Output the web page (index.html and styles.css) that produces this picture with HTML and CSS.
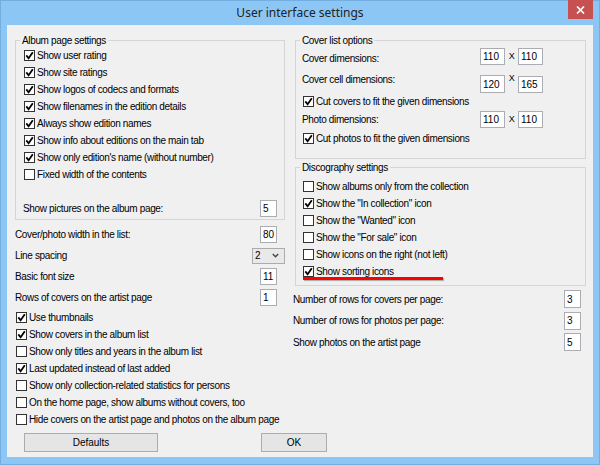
FILE: index.html
```html
<!DOCTYPE html>
<html>
<head>
<meta charset="utf-8">
<title>User interface settings</title>
<link rel="stylesheet" href="styles.css">
</head>
<body>
<div class="window">
  <div class="titlebar">
    <span></span>
    <div class="title">User interface settings</div>
    <div class="close"><svg width="9" height="8" viewBox="0 0 9 8"><path d="M1 0.5 L8 7.5 M8 0.5 L1 7.5" stroke="#fff" stroke-width="1.7"/></svg></div>
  </div>
  <div class="content">
    <div class="cols">
      <div class="col left">
        <fieldset class="grp album">
          <legend>Album page settings</legend>
          <label class="cb"><span class="box"><svg viewBox="0 0 9 9" width="9" height="9"><path d="M1.3 4.4 L3.6 7.2 L7.8 1.3" fill="none" stroke="#000" stroke-width="1.8"/></svg></span>Show user rating</label>
          <label class="cb"><span class="box"><svg viewBox="0 0 9 9" width="9" height="9"><path d="M1.3 4.4 L3.6 7.2 L7.8 1.3" fill="none" stroke="#000" stroke-width="1.8"/></svg></span>Show site ratings</label>
          <label class="cb"><span class="box"><svg viewBox="0 0 9 9" width="9" height="9"><path d="M1.3 4.4 L3.6 7.2 L7.8 1.3" fill="none" stroke="#000" stroke-width="1.8"/></svg></span>Show logos of codecs and formats</label>
          <label class="cb"><span class="box"><svg viewBox="0 0 9 9" width="9" height="9"><path d="M1.3 4.4 L3.6 7.2 L7.8 1.3" fill="none" stroke="#000" stroke-width="1.8"/></svg></span>Show filenames in the edition details</label>
          <label class="cb"><span class="box"><svg viewBox="0 0 9 9" width="9" height="9"><path d="M1.3 4.4 L3.6 7.2 L7.8 1.3" fill="none" stroke="#000" stroke-width="1.8"/></svg></span>Always show edition names</label>
          <label class="cb"><span class="box"><svg viewBox="0 0 9 9" width="9" height="9"><path d="M1.3 4.4 L3.6 7.2 L7.8 1.3" fill="none" stroke="#000" stroke-width="1.8"/></svg></span>Show info about editions on the main tab</label>
          <label class="cb"><span class="box"><svg viewBox="0 0 9 9" width="9" height="9"><path d="M1.3 4.4 L3.6 7.2 L7.8 1.3" fill="none" stroke="#000" stroke-width="1.8"/></svg></span>Show only edition's name (without number)</label>
          <label class="cb"><span class="box"></span>Fixed width of the contents</label>
          <div class="frow pics"><span>Show pictures on the album page:</span><input class="num" value="5"></div>
        </fieldset>

        <div class="frow first"><span>Cover/photo width in the list:</span><input class="num" value="80"></div>
        <div class="frow"><span>Line spacing</span><div class="combo"><span>2</span><svg width="7" height="5" viewBox="0 0 7 5"><path d="M0.8 1 L3.5 3.8 L6.2 1" fill="none" stroke="#444" stroke-width="1.4"/></svg></div></div>
        <div class="frow"><span>Basic font size</span><input class="num" value="11"></div>
        <div class="frow"><span>Rows of covers on the artist page</span><input class="num" value="1"></div>

        <div class="lcbs">
          <label class="cb"><span class="box"><svg viewBox="0 0 9 9" width="9" height="9"><path d="M1.3 4.4 L3.6 7.2 L7.8 1.3" fill="none" stroke="#000" stroke-width="1.8"/></svg></span>Use thumbnails</label>
          <label class="cb"><span class="box"><svg viewBox="0 0 9 9" width="9" height="9"><path d="M1.3 4.4 L3.6 7.2 L7.8 1.3" fill="none" stroke="#000" stroke-width="1.8"/></svg></span>Show covers in the album list</label>
          <label class="cb"><span class="box"></span>Show only titles and years in the album list</label>
          <label class="cb"><span class="box"><svg viewBox="0 0 9 9" width="9" height="9"><path d="M1.3 4.4 L3.6 7.2 L7.8 1.3" fill="none" stroke="#000" stroke-width="1.8"/></svg></span>Last updated instead of last added</label>
          <label class="cb"><span class="box"></span>Show only collection-related statistics for persons</label>
          <label class="cb"><span class="box"></span>On the home page, show albums without covers, too</label>
          <label class="cb"><span class="box"></span>Hide covers on the artist page and photos on the album page</label>
        </div>
      </div>

      <div class="col right">
        <fieldset class="grp cover">
          <legend>Cover list options</legend>
          <div class="drow r1"><span class="lbl">Cover dimensions:</span><input class="dim" value="110"><span class="x">X</span><input class="dim" value="110"></div>
          <div class="drow r2"><span class="lbl">Cover cell dimensions:</span><input class="dim" value="120"><span class="x">X</span><input class="dim d2" value="165"></div>
          <label class="cb"><span class="box"><svg viewBox="0 0 9 9" width="9" height="9"><path d="M1.3 4.4 L3.6 7.2 L7.8 1.3" fill="none" stroke="#000" stroke-width="1.8"/></svg></span>Cut covers to fit the given dimensions</label>
          <div class="drow r4"><span class="lbl">Photo dimensions:</span><input class="dim" value="110"><span class="x">X</span><input class="dim" value="110"></div>
          <label class="cb r5"><span class="box"><svg viewBox="0 0 9 9" width="9" height="9"><path d="M1.3 4.4 L3.6 7.2 L7.8 1.3" fill="none" stroke="#000" stroke-width="1.8"/></svg></span>Cut photos to fit the given dimensions</label>
        </fieldset>

        <fieldset class="grp disco">
          <legend>Discography settings</legend>
          <label class="cb"><span class="box"></span>Show albums only from the collection</label>
          <label class="cb"><span class="box"><svg viewBox="0 0 9 9" width="9" height="9"><path d="M1.3 4.4 L3.6 7.2 L7.8 1.3" fill="none" stroke="#000" stroke-width="1.8"/></svg></span>Show the "In collection" icon</label>
          <label class="cb"><span class="box"></span>Show the "Wanted" icon</label>
          <label class="cb"><span class="box"></span>Show the "For sale" icon</label>
          <label class="cb"><span class="box"></span>Show icons on the right (not left)</label>
          <label class="cb"><span class="box"><svg viewBox="0 0 9 9" width="9" height="9"><path d="M1.3 4.4 L3.6 7.2 L7.8 1.3" fill="none" stroke="#000" stroke-width="1.8"/></svg></span>Show sorting icons</label>
          <div class="redline"></div>
        </fieldset>

        <div class="frow first"><span>Number of rows for covers per page:</span><input class="num" value="3"></div>
        <div class="frow"><span>Number of rows for photos per page:</span><input class="num" value="3"></div>
        <div class="frow"><span>Show photos on the artist page</span><input class="num" value="5"></div>
      </div>
    </div>

    <div class="buttons">
      <button class="btn defaults">Defaults</button>
      <button class="btn ok">OK</button>
    </div>
  </div>
</div>
</body>
</html>
```

FILE: styles.css
```css
* { box-sizing: border-box; }

body {
  margin: 0;
  font-family: "Liberation Sans", Arial, sans-serif;
  font-size: 10px;
  letter-spacing: -0.35px;
  color: #000;
}

.window {
  width: 600px;
  height: 465px;
  background: #8bc6f5;
  border: 1px solid #74addf;
  padding: 0 6px 7px;
  display: flex;
  flex-direction: column;
}

.titlebar {
  height: 24px;
  display: grid;
  grid-template-columns: 1fr auto 1fr;
  align-items: start;
}

.title {
  font-family: "Noto Sans", "Open Sans", sans-serif;
  font-size: 12px;
  letter-spacing: 0;
  color: #222;
  line-height: 24px;
}

.close {
  justify-self: end;
  width: 25px;
  height: 19px;
  margin-top: -1px;
  background: #c75050;
  display: flex;
  align-items: center;
  justify-content: center;
}

.content {
  flex: 1;
  background: #f0f0f0;
  padding: 9px 7px 0 8px;
  display: flex;
  flex-direction: column;
}

.cols {
  display: grid;
  grid-template-columns: 270px 1fr;
  column-gap: 8px;
}

.col { display: flex; flex-direction: column; min-width: 0; }

.grp {
  margin: 0;
  min-width: 0;
  border: 1px solid #d5d5d5;
  padding: 0 0 1px 4px;
}

.grp legend {
  padding: 0 2px;
  line-height: 13px;
}

.cb {
  display: flex;
  align-items: center;
  height: 17px;
  white-space: nowrap;
}

.box {
  width: 11px;
  height: 11px;
  flex: none;
  border: 1px solid #333;
  background: #fff;
  margin-right: 2px;
  display: flex;
  align-items: center;
  justify-content: center;
}

.box svg { display: block; }

.album .cb { padding-left: 4px; }

.frow {
  display: flex;
  align-items: center;
  justify-content: space-between;
  height: 21px;
  white-space: nowrap;
}

.num, .dim {
  height: 17px;
  margin: 0;
  padding: 0 0 0 2px;
  border: 1px solid #abadb3;
  background: #fff;
  font: inherit;
  letter-spacing: 0;
  color: #000;
  outline: none;
}

.num { width: 17px; }

.left > .frow .num { margin-right: 8px; }
.left > .frow.first { margin-top: 4px; }

.pics {
  height: 20px;
  margin-top: 15px;
  padding: 0 7px 0 3px;
}

.combo {
  width: 33px;
  height: 16px;
  border: 1px solid #acacac;
  background: #e9e9e9;
  display: flex;
  align-items: center;
  justify-content: space-between;
  padding: 0 5px 0 2px;
}

.lcbs { margin-top: 1px; }
.lcbs .cb { padding-left: 1px; }

/* right column */
.right .grp { margin-left: 2px; }

.cover { padding-bottom: 11px; }

.drow {
  display: grid;
  grid-template-columns: 178px 25px 13px 25px;
  align-items: center;
  padding-left: 2px;
  white-space: nowrap;
}

.dim { width: 25px; }

.x {
  font-size: 9px;
  text-align: center;
  line-height: 10px;
}

.r1 { height: 18px; }
.r1 .lbl { padding-top: 4px; }
.r1 .dim { height: 17px; }

.r2 {
  height: 18px;
  margin-top: 10px;
  align-items: start;
}
.r2 .lbl { line-height: 13px; margin-top: -2px; }
.r2 .x { margin-top: -2px; }
.r2 .dim { height: 18px; }
.r2 .d2 { margin-top: 1px; height: 17px; }

.r4 { height: 18px; }
.r5 { margin-top: 2px; }

.right .cb { padding-left: 3px; }

.disco {
  margin-top: 2px;
  padding: 4px 0 5px 4px;
}

.redline {
  width: 140px;
  height: 3px;
  margin: -3px 0 0 3px;
  background: #ff0000;
  box-shadow: 1px 1px 1px rgba(0, 0, 0, 0.3);
}

.right > .frow { height: 21.5px; }
.right > .frow.first { margin-top: 2.5px; }
.right > .frow .num { margin-right: 5px; height: 18px; }

.buttons {
  display: flex;
  gap: 103px;
  margin-top: 5px;
  padding-left: 9px;
}

.btn {
  height: 19px;
  margin: 0;
  padding: 0;
  border: 1px solid #acacac;
  background: #e5e5e5;
  font: inherit;
  color: #000;
}

.defaults { width: 134px; }
.ok { width: 66px; }
```
